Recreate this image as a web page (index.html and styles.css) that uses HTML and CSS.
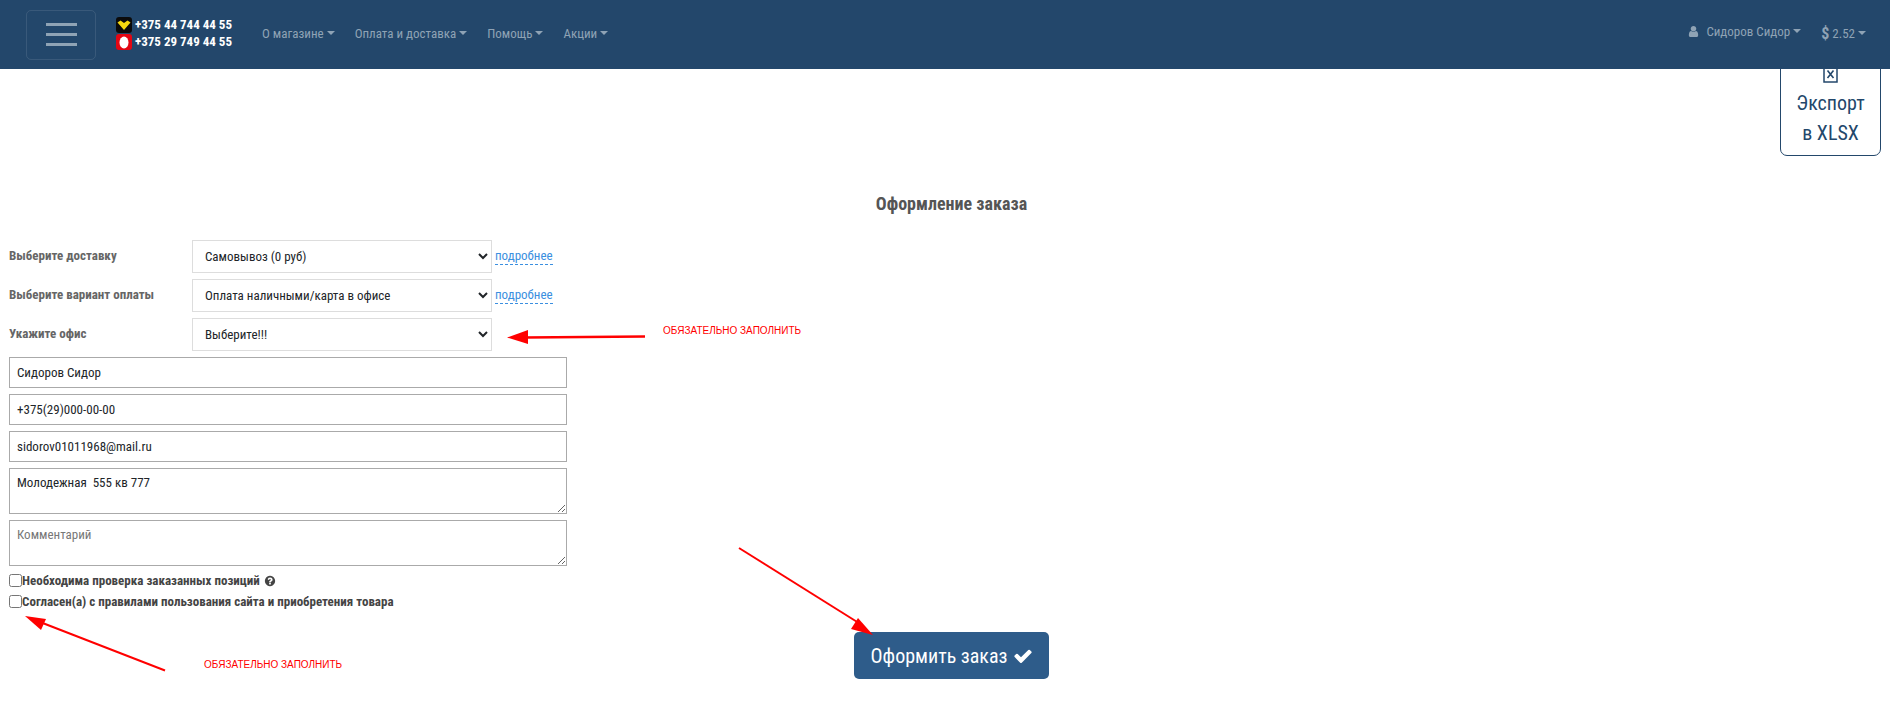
FILE: index.html
```html
<!DOCTYPE html>
<html lang="ru">
<head>
  <meta charset="UTF-8">
  <title>Оформление заказа</title>
  <link rel="stylesheet" href="styles.css">
</head>
<body>
  <nav class="navbar">
    <button class="burger" type="button">
      <span class="burger-line"></span>
      <span class="burger-line"></span>
      <span class="burger-line"></span>
    </button>
    <div class="phones">
      <div class="phone">
        <svg class="phone-icon" viewBox="0 0 16 16">
          <rect width="16" height="16" rx="3" fill="#0b0b0b"/>
          <path d="M1.500 5.500 4.500 3.500 8 6 11.500 3.500 14.500 5.500 8 13z" fill="#f6d90f"/>
        </svg>
        <span>+375 44 744 44 55</span>
      </div>
      <div class="phone">
        <svg class="phone-icon" viewBox="0 0 16 16">
          <rect width="16" height="16" rx="3" fill="#e30613"/>
          <ellipse cx="8" cy="8.500" rx="4.500" ry="6" fill="#fff"/>
        </svg>
        <span>+375 29 749 44 55</span>
      </div>
    </div>
    <ul class="nav-links">
      <li class="nav-link caret">О магазине</li>
      <li class="nav-link caret">Оплата и доставка</li>
      <li class="nav-link caret">Помощь</li>
      <li class="nav-link caret">Акции</li>
    </ul>
    <ul class="nav-links nav-right">
      <li class="nav-link caret"><svg class="user-icon" viewBox="0 0 1792 1792"><path d="M1536 1399q0 109-62.500 187t-150.500 78h-854q-88 0-150.500-78t-62.500-187q0-85 8.500-160.500t31.500-152 58.500-131 94-89 134.500-34.500q131 128 313 128t313-128q76 0 134.500 34.500t94 89 58.500 131 31.500 152 8.500 160.500zm-256-887q0 159-112.500 271.500t-271.500 112.500-271.500-112.500-112.500-271.500 112.500-271.500 271.500-112.500 271.500 112.500 112.500 271.500z"/></svg>Сидоров Сидор</li>
      <li class="nav-link caret"><b class="dollar">$</b> 2.52</li>
    </ul>
  </nav>

  <a class="export" href="#">
    <svg class="export-icon" viewBox="0 0 15 30">
      <rect x="1" y="1" width="13" height="28" fill="#fff" stroke="#23476b" stroke-width="1.500"/>
      <path d="M4.500 17.500 10.500 25M10.500 17.500 4.500 25" stroke="#23476b" stroke-width="1.600"/>
    </svg>
    <span>Экспорт</span>
    <span>в XLSX</span>
  </a>

  <main class="page">
    <h2 class="order-title">Оформление заказа</h2>

    <form class="order-form">
      <div class="form-row">
        <label class="row-label">Выберите доставку</label>
        <select class="field-select"><option>Самовывоз (0 руб)</option></select>
        <a class="more" href="#">подробнее</a>
      </div>
      <div class="form-row">
        <label class="row-label">Выберите вариант оплаты</label>
        <select class="field-select"><option>Оплата наличными/карта в офисе</option></select>
        <a class="more" href="#">подробнее</a>
      </div>
      <div class="form-row">
        <label class="row-label">Укажите офис</label>
        <select class="field-select"><option>Выберите!!!</option></select>
      </div>

      <input class="field" type="text" value="Сидоров Сидор">
      <input class="field" type="text" value="+375(29)000-00-00">
      <input class="field" type="text" value="sidorov01011968@mail.ru">
      <textarea class="field field-area">Молодежная  555 кв 777</textarea>
      <textarea class="field field-area field-last" placeholder="Комментарий"></textarea>

      <label class="check-row">
        <input type="checkbox">
        Необходима проверка заказанных позиций
        <svg class="help-icon" viewBox="0 0 1792 1792"><path d="M1024 1376v-192q0-14-9-23t-23-9h-192q-14 0-23 9t-9 23v192q0 14 9 23t23 9h192q14 0 23-9t9-23zm256-672q0-88-55.500-163t-138.500-116-170-41q-243 0-371 213-15 24 8 42l132 100q7 6 19 6 16 0 25-12 53-68 86-92 34-24 86-24 48 0 85.500 26t37.500 59q0 38-20 61t-68 45q-63 28-115.500 86.500t-52.500 125.500v36q0 14 9 23t23 9h192q14 0 23-9t9-23q0-19 21.500-49.500t54.500-49.500q32-18 49-28.500t46-35 44.500-48 28-60.500 12.500-81zm384 192q0 209-103 385.500t-279.500 279.500-385.500 103-385.500-103-279.500-279.500-103-385.500 103-385.500 279.500-279.500 385.500-103 385.500 103 279.500 279.500 103 385.500z"/></svg>
      </label>
      <label class="check-row">
        <input type="checkbox">
        Согласен(а) с правилами пользования сайта и приобретения товара
      </label>

      <div class="submit-row">
        <button class="submit" type="button">
          Оформить заказ
          <svg class="check-icon" viewBox="0 0 1792 1792"><path d="M1671 566q0 40-28 68l-724 724-136 136q-28 28-68 28t-68-28l-136-136-362-362q-28-28-28-68t28-68l136-136q28-28 68-28t68 28l294 295 656-657q28-28 68-28t68 28l136 136q28 28 28 68z"/></svg>
        </button>
      </div>
    </form>
  </main>

  <!-- red marks drawn on top of the screenshot -->
  <svg class="marks" viewBox="0 0 1890 713">
    <path d="M645 336.500 525 337.500" stroke="#f00" stroke-width="2.500" fill="none"/>
    <path d="M507 337.500 528 330 528 344z" fill="#f00"/>
    <path d="M165 670.500 40 622" stroke="#f00" stroke-width="2" fill="none"/>
    <path d="M25 616 46 619 41 630z" fill="#f00"/>
    <path d="M739 548 862 625" stroke="#f00" stroke-width="2" fill="none"/>
    <path d="M873 635 858 618 851 629z" fill="#f00"/>
  </svg>
  <span class="mark-text mark-office">ОБЯЗАТЕЛЬНО ЗАПОЛНИТЬ</span>
  <span class="mark-text mark-rules">ОБЯЗАТЕЛЬНО ЗАПОЛНИТЬ</span>
</body>
</html>
```

FILE: styles.css
```css
* {
  box-sizing: border-box;
}

body {
  margin: 0;
  height: 713px;
  overflow: hidden;
  position: relative;
  background: #fff;
  font-family: "Roboto Condensed", "Liberation Sans Narrow", Roboto, sans-serif;
  font-stretch: condensed;
  font-size: 13px;
  color: #212529;
}

.navbar {
  position: relative;
  z-index: 2;
  display: flex;
  align-items: center;
  height: 69px;
  padding: 0 24px 0 26px;
  background: #23476b;
}

.burger {
  display: flex;
  flex-direction: column;
  justify-content: center;
  align-items: center;
  gap: 7px;
  width: 70px;
  height: 50px;
  padding: 0;
  background: none;
  border: 1px solid rgba(255, 255, 255, 0.1);
  border-radius: 5px;
}

.burger-line {
  width: 31px;
  height: 3px;
  background: #8fa3b5;
}

.phones {
  margin-left: 20px;
  margin-bottom: 3px;
  color: #fff;
  font-weight: 700;
  font-size: 13px;
}

.phone {
  display: flex;
  align-items: center;
  gap: 3px;
  height: 17px;
}

.phone-icon {
  width: 16px;
  height: 16px;
}

.nav-links {
  display: flex;
  gap: 20px;
  margin: 0 0 2px 30px;
  padding: 0;
  list-style: none;
}

.nav-right {
  gap: 20px;
  margin-left: auto;
}

.nav-link {
  color: #8fa3b5;
  font-size: 13px;
  white-space: nowrap;
}

.caret::after {
  content: "";
  display: inline-block;
  margin-left: 3px;
  vertical-align: 3px;
  border-top: 4px solid;
  border-left: 4px solid transparent;
  border-right: 4px solid transparent;
}

.user-icon {
  width: 13px;
  height: 13px;
  margin-right: 6px;
  vertical-align: -2px;
  fill: #8fa3b5;
}

.dollar {
  font-size: 16px;
  vertical-align: -1px;
}

.export {
  position: absolute;
  top: 40px;
  right: 9px;
  z-index: 1;
  display: flex;
  flex-direction: column;
  align-items: center;
  width: 101px;
  height: 116px;
  padding-top: 12px;
  border: 1px solid #23476b;
  border-radius: 7px;
  color: #23476b;
  font-size: 20px;
  line-height: 30px;
  text-decoration: none;
}

.export-icon {
  width: 15px;
  height: 30px;
  margin-bottom: 5px;
  flex: none;
}

.page {
  padding: 123px 9px 0;
}

.order-title {
  margin: 0 0 24px;
  padding-left: 13px;
  text-align: center;
  color: #555;
  font-size: 18px;
  line-height: 24px;
  font-weight: 700;
}

.form-row {
  display: flex;
  align-items: center;
  height: 33px;
  margin-bottom: 6px;
}

.row-label {
  width: 183px;
  padding-bottom: 2px;
  color: #666;
  font-size: 13px;
  font-weight: 700;
}

.field-select {
  width: 300px;
  height: 33px;
  padding: 0 8px;
  background: #fff;
  border: 1px solid #ddd;
  color: #212529;
  font: inherit;
  font-stretch: condensed;
}

.more {
  margin-left: 3px;
  padding-bottom: 1px;
  color: #3b8fe0;
  border-bottom: 1px dashed #3b8fe0;
  text-decoration: none;
}

.field {
  display: block;
  width: 558px;
  height: 31px;
  margin-bottom: 6px;
  padding: 0 7px;
  border: 1px solid #aaa;
  color: #212529;
  font: inherit;
  font-stretch: condensed;
}

.field-area {
  height: 46px;
  padding: 6px 7px;
}

.field-last {
  margin-bottom: 4px;
}

.field-area::placeholder {
  color: #777;
}

.check-row {
  display: flex;
  align-items: center;
  height: 21px;
  color: #444;
  font-size: 13px;
  font-weight: 700;
}

.check-row input {
  width: 13px;
  height: 13px;
  margin: 0;
}

.help-icon {
  width: 12px;
  height: 12px;
  margin-left: 4px;
  fill: #444;
}

.submit-row {
  display: flex;
  justify-content: center;
  padding-left: 13px;
  margin-top: 20px;
}

.submit {
  display: flex;
  align-items: center;
  gap: 6px;
  height: 47px;
  padding: 0 16px 0 17px;
  background: #2e5c8a;
  border: none;
  border-radius: 5px;
  color: #fff;
  font: inherit;
  font-stretch: condensed;
  font-size: 20px;
}

.check-icon {
  width: 20px;
  height: 20px;
  fill: #fff;
}

.marks {
  position: absolute;
  top: 0;
  left: 0;
  width: 1890px;
  height: 713px;
  z-index: 3;
  pointer-events: none;
}

.mark-text {
  position: absolute;
  z-index: 3;
  color: #f00;
  font-family: "Liberation Sans", sans-serif;
  font-stretch: normal;
  font-size: 10px;
  line-height: 14px;
}

.mark-office {
  top: 324px;
  left: 663px;
}

.mark-rules {
  top: 658px;
  left: 204px;
}
```
